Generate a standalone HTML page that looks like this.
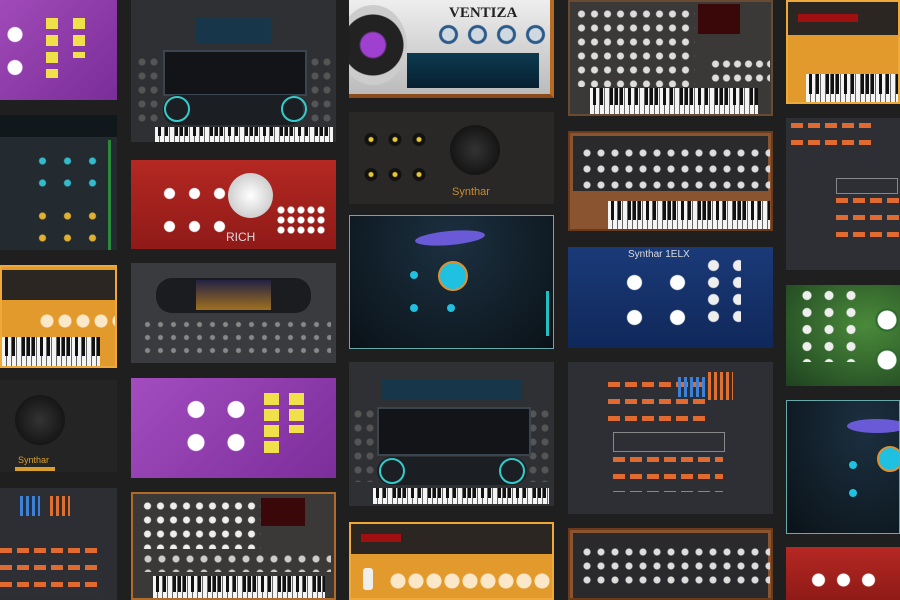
<!DOCTYPE html><html><head><style>
body{margin:0;width:900px;height:600px;overflow:hidden;background:#1f1f20;position:relative;font-family:"Liberation Sans",sans-serif}
.p{position:absolute;box-sizing:border-box;overflow:hidden}
.kb{position:absolute;background:repeating-linear-gradient(90deg,#f4f4f4 0 4px,#666 4px 5px)}
.kb::after{content:"";position:absolute;left:0;right:0;top:0;height:62%;background:repeating-linear-gradient(90deg,transparent 0 3px,#111 3px 6px,transparent 6px 10px,#111 10px 13px,transparent 13px 20px,#111 20px 23px,transparent 23px 25px,#111 25px 28px,transparent 28px 30px,#111 30px 33px,transparent 33px 35px)}
.dots{position:absolute}
.wdots{position:absolute}
.og{position:absolute;background:repeating-linear-gradient(90deg,#e06a30 0 12px,transparent 12px 17px)}
.og::after{content:"";position:absolute;inset:0;background:repeating-linear-gradient(transparent 0 5px,#2d2f35 5px 17px)}
.t{position:absolute;color:#ddd;font-size:11px;white-space:nowrap}
</style></head><body>
<!-- col1 -->
<div class="p" style="left:0;top:0;width:117px;height:100px;background:linear-gradient(135deg,#a04ab8,#7a2d98)">
<div class="wdots" style="left:0;top:18px;width:30px;height:70px;background:radial-gradient(circle,#fff 0 7px,transparent 8px) 0 0/30px 33px"></div>
<div style="position:absolute;left:46px;top:18px;width:12px;height:60px;background:repeating-linear-gradient(#f0e14a 0 11px,transparent 11px 17px)"></div>
<div style="position:absolute;left:73px;top:18px;width:12px;height:40px;background:repeating-linear-gradient(#f0e14a 0 11px,#eee 11px 11px,transparent 11px 17px)"></div></div>
<div class="p" style="left:0;top:115px;width:117px;height:135px;background:#232a30">
<div style="position:absolute;left:0;top:0;width:117px;height:22px;background:#10181c"></div>
<div class="dots" style="left:30px;top:35px;width:80px;height:40px;background:radial-gradient(circle,#3bc 0 3px,transparent 4px) 0 0/25px 22px"></div>
<div class="dots" style="left:30px;top:90px;width:80px;height:45px;background:radial-gradient(circle,#e0b030 0 3px,transparent 4px) 0 0/25px 22px"></div>
<div style="position:absolute;left:108px;top:25px;width:3px;height:110px;background:#2a8a3a"></div></div>
<div class="p" style="left:0;top:265px;width:117px;height:103px;background:#e29a2c;border:2px solid #f0a838">
<div style="position:absolute;left:0;top:3px;width:113px;height:30px;background:#2b2622"></div>
<div class="wdots" style="left:36px;top:15px;width:80px;height:18px;top:45px;background:radial-gradient(circle,#fbe8c8 0 6px,transparent 7px) 0 0/18px 18px"></div>
<div class="kb" style="left:0;top:70px;width:98px;height:30px"></div></div>
<div class="p" style="left:0;top:380px;width:117px;height:92px;background:#242424">
<div style="position:absolute;left:15px;top:15px;width:50px;height:50px;border-radius:50%;background:radial-gradient(circle,#333,#0a0a0a)"></div>
<div style="position:absolute;left:15px;top:87px;width:40px;height:4px;background:#d9a030"></div>
<div class="t" style="left:18px;top:75px;color:#d9a030;font-size:9px">Synthar</div></div>
<div class="p" style="left:0;top:488px;width:117px;height:112px;background:#2c2e33">
<div style="position:absolute;left:20px;top:8px;width:20px;height:20px;background:repeating-linear-gradient(90deg,#3b82d8 0 3px,transparent 3px 6px)"></div>
<div style="position:absolute;left:50px;top:8px;width:20px;height:20px;background:repeating-linear-gradient(90deg,#e07030 0 3px,transparent 3px 6px)"></div>
<div class="og" style="left:0;top:60px;width:100px;height:50px"></div></div>
<!-- col2 -->
<div class="p" style="left:131px;top:0;width:205px;height:142px;background:#2e3033">
<div class="dots" style="left:5px;top:55px;width:25px;height:70px;background:radial-gradient(circle,#555 0 3px,transparent 4px) 0 0/12px 14px"></div>
<div class="dots" style="left:178px;top:55px;width:25px;height:70px;background:radial-gradient(circle,#555 0 3px,transparent 4px) 0 0/12px 14px"></div>
<div style="position:absolute;left:65px;top:18px;width:75px;height:25px;background:#17364a"></div>
<div style="position:absolute;left:32px;top:50px;width:140px;height:42px;background:#121418;border:2px solid #3a4550"></div>
<div style="position:absolute;left:32px;top:95px;width:140px;height:30px;background:#1b1e22;border-radius:14px"></div>
<div style="position:absolute;left:33px;top:96px;width:26px;height:26px;border-radius:50%;border:2px solid #3cc;box-sizing:border-box"></div>
<div style="position:absolute;left:150px;top:96px;width:26px;height:26px;border-radius:50%;border:2px solid #3cc;box-sizing:border-box"></div>
<div class="kb" style="left:24px;top:127px;width:178px;height:15px"></div></div>
<div class="p" style="left:131px;top:160px;width:205px;height:89px;background:linear-gradient(#b52822,#8f1a18)">
<div class="wdots" style="left:26px;top:17px;width:80px;height:65px;background:radial-gradient(circle,#fff 0 5px,transparent 6px) 0 0/25px 33px"></div>
<div style="position:absolute;left:97px;top:13px;width:45px;height:45px;border-radius:50%;background:radial-gradient(circle,#fff,#bbb)"></div>
<div class="dots" style="left:145px;top:45px;width:50px;height:30px;background:radial-gradient(circle,#fff 0 3px,transparent 4px) 0 0/10px 10px"></div>
<div class="t" style="left:95px;top:70px;font-size:12px">RICH</div></div>
<div class="p" style="left:131px;top:263px;width:205px;height:100px;background:#3a3b3e">
<div style="position:absolute;left:25px;top:15px;width:155px;height:35px;background:#1a1c1f;border-radius:16px"></div>
<div style="position:absolute;left:65px;top:17px;width:75px;height:30px;background:linear-gradient(#224,#a07020)"></div>
<div class="dots" style="left:10px;top:55px;width:190px;height:40px;background:radial-gradient(circle,#888 0 2px,transparent 3px) 0 0/13px 13px"></div></div>
<div class="p" style="left:131px;top:378px;width:205px;height:100px;background:linear-gradient(135deg,#a24cc0,#7c2e9a)">
<div class="wdots" style="left:45px;top:15px;width:80px;height:60px;background:radial-gradient(circle,#fff 0 8px,transparent 9px) 0 0/40px 33px"></div>
<div style="position:absolute;left:133px;top:15px;width:15px;height:60px;background:repeating-linear-gradient(#f0e14a 0 12px,transparent 12px 16px)"></div>
<div style="position:absolute;left:158px;top:15px;width:15px;height:40px;background:repeating-linear-gradient(#f0e14a 0 12px,transparent 12px 16px)"></div></div>
<div class="p" style="left:131px;top:492px;width:205px;height:108px;background:#3a3938;border:2px solid #b06a2a">
<div class="dots" style="left:8px;top:5px;width:120px;height:50px;background:radial-gradient(circle,#eee 0 3px,transparent 4px) 0 0/13px 14px"></div>
<div style="position:absolute;left:128px;top:4px;width:44px;height:28px;background:#3a0808"></div>
<div class="dots" style="left:8px;top:58px;width:190px;height:20px;background:radial-gradient(circle,#ccc 0 3px,transparent 4px) 0 0/14px 14px"></div>
<div class="kb" style="left:20px;top:82px;width:172px;height:26px"></div></div>
<!-- col3 -->
<div class="p" style="left:349px;top:0;width:205px;height:98px;background:linear-gradient(#eee,#bbb);border-right:4px solid #b86a22;border-bottom:4px solid #8a4a1a">
<div style="position:absolute;left:-10px;top:5px;width:68px;height:80px;border-radius:50%;background:radial-gradient(circle,#a040d0 0 12px,#222 14px 30px,#ccc 31px)"></div>
<div class="t" style="left:100px;top:5px;color:#222;font-size:15px;font-family:'Liberation Serif',serif;font-weight:bold">VENTIZA</div>
<div class="wdots" style="left:85px;top:22px;width:115px;height:25px;background:radial-gradient(circle,#d0d8e0 0 6px,#2a5a8a 7px 9px,transparent 10px) 0 0/29px 25px"></div>
<div style="position:absolute;left:58px;top:53px;width:132px;height:35px;background:linear-gradient(#0d3a50,#072030)"></div></div>
<div class="p" style="left:349px;top:112px;width:205px;height:92px;background:#2a2826">
<div class="dots" style="left:10px;top:10px;width:70px;height:60px;background:radial-gradient(circle,#e8c830 0 2px,#111 3px 6px,transparent 7px) 0 0/24px 35px"></div>
<div style="position:absolute;left:101px;top:13px;width:50px;height:50px;border-radius:50%;background:radial-gradient(circle,#333,#080808)"></div>
<div class="t" style="left:103px;top:74px;color:#c88a30">Synthar</div></div>
<div class="p" style="left:349px;top:215px;width:205px;height:134px;background:radial-gradient(ellipse at 50% 20%,#1c3040,#0a1218);border:1px solid #6aa">
<div style="position:absolute;left:65px;top:15px;width:70px;height:14px;border-radius:50%;background:#6a5ad8;transform:rotate(-5deg)"></div>
<div style="position:absolute;left:88px;top:45px;width:26px;height:26px;border-radius:50%;background:#20c0e0;border:2px solid #e09030"></div>
<div style="position:absolute;left:60px;top:55px;width:8px;height:8px;border-radius:50%;background:#20c0e0"></div>
<div style="position:absolute;left:60px;top:88px;width:8px;height:8px;border-radius:50%;background:#20c0e0"></div>
<div style="position:absolute;left:97px;top:88px;width:8px;height:8px;border-radius:50%;background:#20c0e0"></div>
<div style="position:absolute;left:196px;top:75px;width:3px;height:45px;background:#20c0c0"></div></div>
<div class="p" style="left:349px;top:362px;width:205px;height:144px;background:#2e3033">
<div class="dots" style="left:3px;top:45px;width:25px;height:75px;background:radial-gradient(circle,#555 0 3px,transparent 4px) 0 0/12px 14px"></div>
<div class="dots" style="left:178px;top:45px;width:25px;height:75px;background:radial-gradient(circle,#555 0 3px,transparent 4px) 0 0/12px 14px"></div>
<div style="position:absolute;left:32px;top:18px;width:140px;height:20px;background:#17364a"></div>
<div style="position:absolute;left:28px;top:45px;width:150px;height:45px;background:#121418;border:2px solid #3a4550"></div>
<div style="position:absolute;left:28px;top:95px;width:150px;height:28px;background:#1b1e22;border-radius:14px"></div>
<div style="position:absolute;left:30px;top:96px;width:26px;height:26px;border-radius:50%;border:2px solid #3cc;box-sizing:border-box"></div>
<div style="position:absolute;left:150px;top:96px;width:26px;height:26px;border-radius:50%;border:2px solid #3cc;box-sizing:border-box"></div>
<div class="kb" style="left:24px;top:126px;width:176px;height:16px"></div></div>
<div class="p" style="left:349px;top:522px;width:205px;height:78px;background:#e29a2c;border:2px solid #f0a838">
<div style="position:absolute;left:0;top:0;width:205px;height:30px;background:#2b2622"></div>
<div style="position:absolute;left:10px;top:10px;width:40px;height:8px;background:#a01010"></div>
<div style="position:absolute;left:12px;top:44px;width:10px;height:22px;background:#eee;border-radius:3px"></div>
<div class="wdots" style="left:38px;top:46px;width:165px;height:22px;background:radial-gradient(circle,#fbe8c8 0 7px,transparent 8px) 0 0/18px 22px"></div></div>
<!-- col4 -->
<div class="p" style="left:568px;top:0;width:205px;height:116px;background:#3a3938;border:2px solid #6a4a30">
<div class="dots" style="left:5px;top:5px;width:120px;height:80px;background:radial-gradient(circle,#ddd 0 3px,transparent 4px) 0 0/13px 14px"></div>
<div style="position:absolute;left:128px;top:2px;width:42px;height:30px;background:#3a0808"></div>
<div class="dots" style="left:140px;top:55px;width:60px;height:30px;background:radial-gradient(circle,#ddd 0 3px,transparent 4px) 0 0/11px 14px"></div>
<div class="kb" style="left:20px;top:86px;width:168px;height:28px"></div></div>
<div class="p" style="left:568px;top:131px;width:205px;height:100px;background:#8a5430;border:2px solid #6a3a1a">
<div style="position:absolute;left:3px;top:3px;width:195px;height:55px;background:#2a2a2c"></div>
<div class="dots" style="left:10px;top:12px;width:190px;height:45px;background:radial-gradient(circle,#ddd 0 3px,transparent 4px) 0 0/14px 16px"></div>
<div class="kb" style="left:38px;top:68px;width:162px;height:30px"></div></div>
<div class="p" style="left:568px;top:247px;width:205px;height:101px;background:linear-gradient(#1a3a78,#10285a)">
<div class="t" style="left:60px;top:2px;font-size:10px">Synthar 1ELX</div>
<div class="wdots" style="left:45px;top:18px;width:90px;height:65px;background:radial-gradient(circle,#fff 0 7px,transparent 8px) 0 0/43px 35px"></div>
<div style="position:absolute;left:133px;top:10px;width:40px;height:70px;background:radial-gradient(circle,#eee 0 5px,transparent 6px) 0 0/25px 17px"></div></div>
<div class="p" style="left:568px;top:362px;width:205px;height:152px;background:#2d2f35">
<div class="og" style="left:40px;top:20px;width:100px;height:50px"></div>
<div style="position:absolute;left:110px;top:15px;width:30px;height:20px;background:repeating-linear-gradient(90deg,#3b82d8 0 3px,transparent 3px 6px)"></div>
<div style="position:absolute;left:140px;top:10px;width:25px;height:28px;background:repeating-linear-gradient(90deg,#e07030 0 3px,transparent 3px 6px)"></div>
<div style="position:absolute;left:45px;top:70px;width:110px;height:18px;border:1px solid #888;background:repeating-linear-gradient(90deg,transparent 0 12px,#2d2f35 12px 16px)"></div>
<div class="og" style="left:45px;top:95px;width:110px;height:35px"></div></div>
<div class="p" style="left:568px;top:528px;width:205px;height:72px;background:#8a5430;border:2px solid #6a3a1a">
<div style="position:absolute;left:3px;top:3px;width:195px;height:65px;background:#2a2a2c"></div>
<div class="dots" style="left:10px;top:15px;width:190px;height:45px;background:radial-gradient(circle,#ddd 0 3px,transparent 4px) 0 0/14px 14px"></div></div>
<!-- col5 -->
<div class="p" style="left:786px;top:0;width:114px;height:104px;background:#e29a2c;border:2px solid #f0a838">
<div style="position:absolute;left:0;top:0;width:114px;height:33px;background:#2b2622"></div>
<div style="position:absolute;left:10px;top:12px;width:60px;height:8px;background:#a01010"></div>
<div class="kb" style="left:18px;top:72px;width:96px;height:32px"></div></div>
<div class="p" style="left:786px;top:118px;width:114px;height:152px;background:#2d2f35">
<div class="og" style="left:5px;top:5px;width:80px;height:30px"></div>
<div style="position:absolute;left:50px;top:60px;width:60px;height:14px;border:1px solid #888;background:repeating-linear-gradient(90deg,transparent 0 13px,#2d2f35 13px 17px)"></div>
<div class="og" style="left:50px;top:80px;width:64px;height:40px"></div></div>
<div class="p" style="left:786px;top:285px;width:114px;height:101px;background:radial-gradient(ellipse at 70% 40%,#4a8a3a,#1e4220)">
<div class="wdots" style="left:10px;top:2px;width:70px;height:75px;background:radial-gradient(circle,#eee 0 4px,transparent 5px) 0 0/22px 17px"></div>
<div class="wdots" style="left:88px;top:15px;width:26px;height:70px;background:radial-gradient(circle,#fff 0 9px,#2a6a2a 10px 11px,transparent 12px) 0 0/26px 40px"></div></div>
<div class="p" style="left:786px;top:400px;width:114px;height:134px;background:radial-gradient(ellipse at 70% 20%,#1c3040,#0a1218);border:1px solid #6aa">
<div style="position:absolute;left:60px;top:18px;width:60px;height:14px;border-radius:50%;background:#6a5ad8"></div>
<div style="position:absolute;left:90px;top:45px;width:22px;height:22px;border-radius:50%;background:#20c0e0;border:2px solid #e09030"></div>
<div style="position:absolute;left:62px;top:60px;width:8px;height:8px;border-radius:50%;background:#20c0e0"></div>
<div style="position:absolute;left:62px;top:88px;width:8px;height:8px;border-radius:50%;background:#20c0e0"></div></div>
<div class="p" style="left:786px;top:547px;width:114px;height:53px;background:linear-gradient(#b52822,#8f1a18)">
<div class="wdots" style="left:20px;top:18px;width:70px;height:30px;background:radial-gradient(circle,#fff 0 6px,transparent 7px) 0 0/25px 30px"></div></div>
</body></html>
